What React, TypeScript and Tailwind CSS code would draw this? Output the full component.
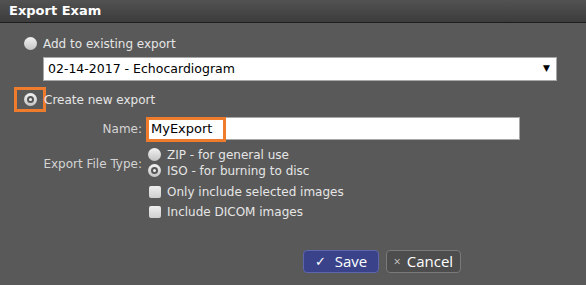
import { useState } from 'react';

const font = { fontFamily: '"DejaVu Sans", Verdana, sans-serif' };

const Radio = ({ checked }: { checked?: boolean }) => (
  <span className="relative inline-block w-[13px] h-[13px] rounded-full bg-gradient-to-b from-[#f2f2f2] to-[#c4c4c4] shrink-0">
    {checked && <span className="absolute left-[3px] top-[3px] w-[7px] h-[7px] rounded-full border-[2px] border-[#555] bg-[#eee]" />}
  </span>
);

const Check = () => (
  <span className="inline-block w-[12px] h-[12px] rounded-[2px] bg-gradient-to-b from-[#eeeeee] to-[#cfcfcf] shrink-0" />
);

export default function App() {
  const [name, setName] = useState('MyExport');

  return (
    <div className="w-[586px] h-[285px] bg-[#595959] overflow-hidden text-[#e6e6e6] text-[12px]" style={font}>
      <div className="h-[23px] bg-gradient-to-b from-[#525252] to-[#3c3c3c] border-b border-[#1e1e1e] flex items-center px-[9px]">
        <span className="text-white font-bold text-[13px]">Export Exam</span>
      </div>

      <div className="pt-[13px]">
        <div className="flex items-center h-[15px] pl-[24px] gap-[6px]">
          <Radio />
          <span>Add to existing export</span>
        </div>

        <div className="ml-[43px] mt-[6px] w-[514px] h-[24px] bg-white border border-[#a8a8a8] flex items-center justify-between pl-[4px] pr-[6px] text-black text-[12.5px]">
          <span>02-14-2017 - Echocardiogram</span>
          <span className="text-[9px]">▼</span>
        </div>

        <div className="flex items-center mt-[6px]">
          <div className="ml-[14px] w-[32px] h-[25px] border-[3px] border-[#ee7c2c] flex items-center justify-center">
            <Radio checked />
          </div>
          <span className="-ml-[2px]">Create new export</span>
        </div>

        <div className="flex items-center mt-[5px] h-[23px]">
          <span className="w-[143px] text-right text-[#d4d4d4] pr-[1px]">Name:</span>
          <div className="relative ml-[3px]">
            <input
              value={name}
              onChange={(e) => setName(e.target.value)}
              className="w-[374px] h-[23px] bg-white border border-[#a8a8a8] text-black text-[13px] pl-[4px] outline-none"
              style={font}
            />
            <div className="absolute left-0 top-0 w-[80px] h-[25px] border-[3px] border-[#ee7c2c] pointer-events-none" />
          </div>
        </div>

        <div className="flex mt-[7px]">
          <span className="w-[143px] text-right text-[#d4d4d4] pt-[8px] pr-[1px]">Export File Type:</span>
          <div className="ml-[5px] flex flex-col">
            <div className="flex items-center gap-[6px] h-[15px]">
              <Radio />
              <span>ZIP - for general use</span>
            </div>
            <div className="flex items-center gap-[6px] h-[15px] mt-[1px]">
              <Radio checked />
              <span>ISO - for burning to disc</span>
            </div>
            <div className="flex items-center gap-[6px] h-[15px] mt-[6px] pl-[1px]">
              <Check />
              <span>Only include selected images</span>
            </div>
            <div className="flex items-center gap-[6px] h-[15px] mt-[5px] pl-[1px]">
              <Check />
              <span>Include DICOM images</span>
            </div>
          </div>
        </div>

        <div className="flex mt-[31px] pl-[303px] gap-[7px]" style={{ fontFamily: '"Open Sans", sans-serif' }}>
          <button className="w-[76px] h-[23px] rounded-[4px] bg-[#3a438a] border border-[#5d66ad] text-white text-[15px] flex items-center justify-center gap-[9px]">
            <span className="text-[13px]">✓</span>
            <span>Save</span>
          </button>
          <button className="w-[75px] h-[23px] rounded-[4px] bg-[#4d4d4d] border border-[#7a7a7a] text-white text-[15px] flex items-center justify-center gap-[6px]">
            <span className="text-[12px] text-[#ccc]">×</span>
            <span>Cancel</span>
          </button>
        </div>
      </div>
    </div>
  );
}
